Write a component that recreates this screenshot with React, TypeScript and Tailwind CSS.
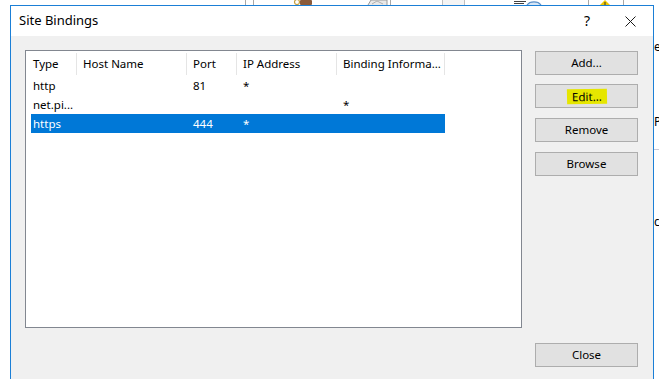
import React from 'react';

const columns = [
  { label: 'Type', width: 46, pad: 2 },
  { label: 'Host Name', width: 110, pad: 6 },
  { label: 'Port', width: 50, pad: 6 },
  { label: 'IP Address', width: 100, pad: 6 },
  { label: 'Binding Informa...', width: 108, pad: 6 },
];

const rows = [
  { cells: ['http', '', '81', '*', ''], selected: false },
  { cells: ['net.pi...', '', '', '', '*'], selected: false },
  { cells: ['https', '', '444', '*', ''], selected: true },
];

const DialogButton = ({ children, className = '' }: { children: React.ReactNode; className?: string }) => (
  <button className={`h-[24px] w-[103px] border border-[#adadad] bg-[#e1e1e1] text-[11.5px] text-black flex items-center justify-center ${className}`}>
    {children}
  </button>
);

const BackdropStrip = () => (
  <div className="h-[5px] flex shrink-0">
    <div className="ml-[245px] w-px bg-[#a8a8a8]" />
    <div className="ml-[7px] w-px bg-[#a8a8a8]" />
    <svg className="ml-[39px]" width="20" height="5" viewBox="0 0 20 5">
      <circle cx="4" cy="2" r="2.5" fill="none" stroke="#c8a040" strokeWidth="1.2" />
      <rect x="7" y="0" width="12" height="5" rx="1" fill="#8a5a3a" />
    </svg>
    <svg className="ml-[54px]" width="21" height="5" viewBox="0 0 21 5">
      <path d="M1 5 L4 0 H20 V5" fill="#e8e8e8" stroke="#9a9a9a" strokeWidth="1" />
      <path d="M5 4 L10 1 L16 4" fill="none" stroke="#b0b0b0" strokeWidth="1" />
    </svg>
    <div className="ml-[2px] w-px bg-[#a8a8a8]" />
    <div className="ml-[51px] w-px bg-[#c0c0c0]" />
    <div className="w-[22px] bg-[#f4f4f4] border-r border-[#c0c0c0]" />
    <svg className="ml-[49px]" width="28" height="5" viewBox="0 0 28 5">
      <path d="M0 1.5 H12 M0 3.5 H10" stroke="#404040" strokeWidth="1" />
      <path d="M13 5 A8 6 0 0 1 27 5" fill="#d6e6f6" stroke="#5a8fc8" strokeWidth="1.2" />
    </svg>
    <div className="ml-[46px] w-px bg-[#a8a8a8]" />
    <svg className="ml-[8px]" width="16" height="5" viewBox="0 0 16 5">
      <path d="M8 0 L13 5 H3 Z" fill="#f0c800" />
      <path d="M8 2 V5" stroke="#303030" strokeWidth="1" />
    </svg>
    <div className="ml-[10px] w-px bg-[#a8a8a8]" />
  </div>
);

const ListView = () => (
  <div className="h-[278px] w-[497px] border border-[#828790] bg-white pl-[5px] text-[11.5px] text-black">
    <div className="flex h-[25px]">
      {columns.map((c) => (
        <div
          key={c.label}
          style={{ width: c.width, paddingLeft: c.pad }}
          className="relative flex items-center whitespace-nowrap overflow-hidden"
        >
          {c.label}
          <div className="absolute right-0 top-[2px] bottom-[1px] w-px bg-[#e5e5e5]" />
        </div>
      ))}
    </div>
    {rows.map((r, i) => (
      <div key={i} className={`flex h-[19px] w-[414px] ${r.selected ? 'bg-[#0078d7] text-white' : ''}`}>
        {r.cells.map((cell, j) => (
          <div
            key={j}
            style={{ width: columns[j].width, paddingLeft: columns[j].pad }}
            className="flex items-center whitespace-nowrap overflow-hidden"
          >
            {cell}
          </div>
        ))}
      </div>
    ))}
  </div>
);

export default function App() {
  return (
    <div className="w-[659px] h-[379px] bg-white overflow-hidden flex flex-col font-['Noto_Sans','Liberation_Sans',sans-serif]">
      <BackdropStrip />
      <div className="flex flex-1 min-h-0">
        <div className="w-[10px] shrink-0" />
        <div className="w-[644px] shrink-0 border-l border-t border-r border-[#1b7fd6] flex flex-col">
          <div className="h-[30px] bg-white flex items-center pl-[8px] text-[13px] text-black">
            <span>Site Bindings</span>
            <span className="ml-auto text-[14px] leading-none mr-[35px]">?</span>
            <svg className="mr-[17px]" width="11" height="11" viewBox="0 0 11 11">
              <path d="M0.5 0.5 L10.5 10.5 M10.5 0.5 L0.5 10.5" stroke="#1a1a1a" strokeWidth="1" />
            </svg>
          </div>
          <div className="flex-1 bg-[#f0f0f0] flex pl-[14px] pt-[14px]">
            <ListView />
            <div className="ml-[13px] flex flex-col">
              <DialogButton className="mt-[1px]">Add...</DialogButton>
              <DialogButton className="mt-[9px]">
                <span className="bg-[#e6e600] px-[5px] py-[1px] -rotate-[1deg] leading-[13px]">Edit...</span>
              </DialogButton>
              <DialogButton className="mt-[10px]">Remove</DialogButton>
              <DialogButton className="mt-[10px]">Browse</DialogButton>
              <DialogButton className="mt-[167px]">Close</DialogButton>
            </div>
          </div>
        </div>
        <div className="w-[5px] shrink-0 overflow-hidden flex flex-col text-[12px] text-black">
          <span className="mt-[35px] leading-[14px]">e</span>
          <span className="mt-[61px] leading-[14px]">P</span>
          <div className="mt-[20px] h-px w-full bg-[#c8c8d8]" />
          <span className="mt-[65px] leading-[14px]">c</span>
        </div>
      </div>
    </div>
  );
}
